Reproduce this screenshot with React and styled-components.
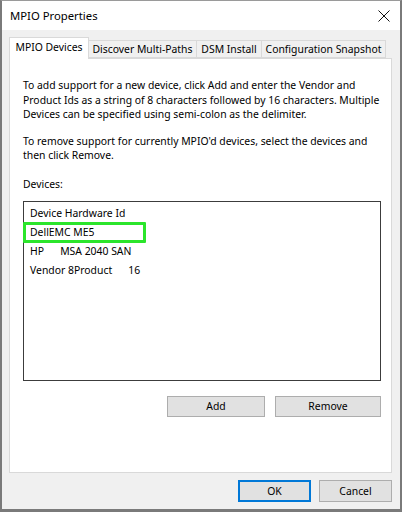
import React from 'react';
import styled, { createGlobalStyle } from 'styled-components';

const GlobalStyle = createGlobalStyle`
  html, body { margin: 0; padding: 0; }
  body {
    font-family: "Noto Sans", "Open Sans", sans-serif;
    font-size: 10.4px;
    color: #000;
    background: #ffffff;
  }
  * { box-sizing: border-box; }
`;

const Window = styled.div`
  width: 402px;
  height: 512px;
  display: flex;
  flex-direction: column;
  background: #f0f0f0;
  border: 2px solid #7a7a7a;
  border-top: 1px solid #9a9a9a;
  border-bottom-width: 3px;
`;

const TitleBar = styled.div`
  height: 29px;
  flex: none;
  background: #ffffff;
  display: flex;
  align-items: center;
  justify-content: space-between;
  padding: 0 10px 0 8px;
  font-size: 11.3px;
`;

const CloseButton = styled.span`
  display: flex;
  align-items: center;
  width: 12px;
  height: 12px;
`;

const Body = styled.div`
  flex: 1;
  display: flex;
  flex-direction: column;
  padding: 7px 8px 0 7px;
`;

const TabStrip = styled.div`
  display: flex;
  align-items: flex-end;
  height: 21px;
  flex: none;
  position: relative;
  z-index: 1;
`;

const Tab = styled.div`
  width: ${p => p.$w}px;
  height: ${p => (p.$active ? '22px' : '18px')};
  margin-bottom: ${p => (p.$active ? '-1px' : '0')};
  padding-bottom: ${p => (p.$active ? '3px' : '0')};
  display: flex;
  align-items: center;
  justify-content: center;
  background: ${p => (p.$active ? '#ffffff' : '#f0f0f0')};
  border: 1px solid #d9d9d9;
  border-bottom: ${p => (p.$active ? 'none' : '1px solid #d9d9d9')};
  margin-left: ${p => (p.$first ? '0' : '-1px')};
  white-space: nowrap;
`;

const Panel = styled.div`
  flex: 1;
  background: #ffffff;
  border: 1px solid #d9d9d9;
  padding: 19px 10px 0 13px;
  display: flex;
  flex-direction: column;
`;

const Paragraph = styled.p`
  margin: 0 0 12px 0;
  line-height: 14.5px;
  white-space: nowrap;
`;

const Label = styled.div`
  line-height: 15px;
  margin: 2px 0 9px 0;
`;

const ListBox = styled.div`
  position: relative;
  width: 358px;
  height: 180px;
  border: 1px solid #3c3c3c;
  padding: 2px 0 0 6px;
`;

const ListRow = styled.div`
  height: 19px;
  line-height: 19px;
  white-space: pre;
`;

const Highlight = styled.div`
  position: absolute;
  left: -1px;
  top: 20px;
  width: 123px;
  height: 21px;
  border: 3px solid #2be52b;
  border-radius: 1px;
`;

const ButtonRow = styled.div`
  display: flex;
  justify-content: flex-end;
  gap: 10px;
  width: 358px;
  margin-top: 15px;
`;

const Button = styled.button`
  font: inherit;
  color: #000;
  width: ${p => p.$w}px;
  height: ${p => p.$h || 21}px;
  background: #e1e1e1;
  border: ${p => (p.$default ? '2px solid #0078d7' : '1px solid #adadad')};
  padding: 0;
  display: flex;
  align-items: center;
  justify-content: center;
`;

const Footer = styled.div`
  flex: none;
  height: 36px;
  display: flex;
  justify-content: flex-end;
  align-items: center;
  gap: 8px;
  padding-bottom: 1px;
`;

export default function App() {
  return (
    <>
      <GlobalStyle />
      <Window>
        <TitleBar>
          <span>MPIO Properties</span>
          <CloseButton>
            <svg width="12" height="12" viewBox="0 0 12 12">
              <path d="M0.5 0.5 L11.5 11.5 M11.5 0.5 L0.5 11.5" stroke="#111" strokeWidth="1" fill="none" />
            </svg>
          </CloseButton>
        </TitleBar>
        <Body>
          <TabStrip>
            <Tab $active $first $w={80}>MPIO Devices</Tab>
            <Tab $w={109}>Discover Multi-Paths</Tab>
            <Tab $w={66}>DSM Install</Tab>
            <Tab $w={125}>Configuration Snapshot</Tab>
          </TabStrip>
          <Panel>
            <Paragraph>
              To add support for a new device, click Add and enter the Vendor and<br />
              Product Ids as a string of 8 characters followed by 16 characters. Multiple<br />
              Devices can be specified using semi-colon as the delimiter.
            </Paragraph>
            <Paragraph>
              To remove support for currently MPIO'd devices, select the devices and<br />
              then click Remove.
            </Paragraph>
            <Label>Devices:</Label>
            <ListBox>
              <ListRow>Device Hardware Id</ListRow>
              <ListRow>DellEMC ME5</ListRow>
              <ListRow>{'HP      MSA 2040 SAN'}</ListRow>
              <ListRow>{'Vendor 8Product      16'}</ListRow>
              <Highlight />
            </ListBox>
            <ButtonRow>
              <Button $w={98}>Add</Button>
              <Button $w={106}>Remove</Button>
            </ButtonRow>
          </Panel>
          <Footer>
            <Button $w={73} $h={22} $default>OK</Button>
            <Button $w={73} $h={22}>Cancel</Button>
          </Footer>
        </Body>
      </Window>
    </>
  );
}
